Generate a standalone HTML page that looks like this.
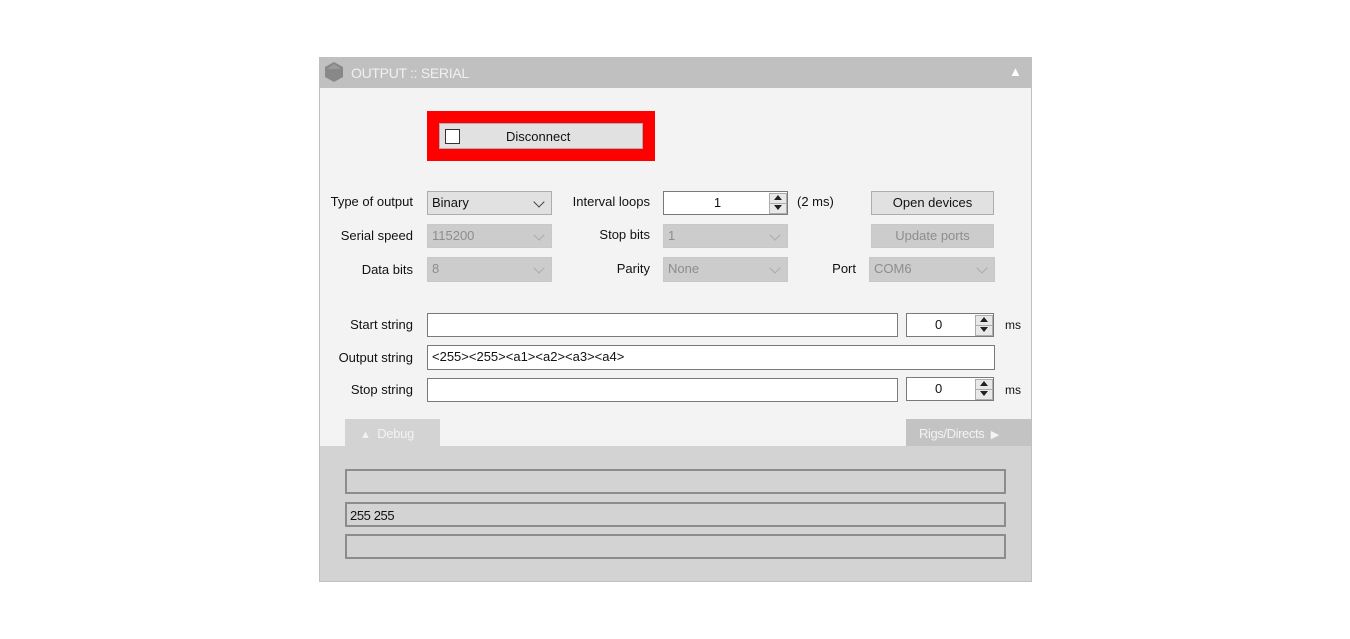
<!DOCTYPE html>
<html><head><style>
body{margin:0;width:1350px;height:639px;background:#fff;position:relative;font-family:"Liberation Sans",sans-serif;font-size:13px;color:#111;overflow:hidden}
div{position:absolute;box-sizing:border-box}
.lbl{text-align:right}
.cb{background:#e1e1e1;border:1px solid #adadad;padding:3px 0 0 4px}
.cbd{background:#cccccc;border:1px solid #c8c8c8;color:#8d8d8d;padding:3px 0 0 4px}
.arr{position:absolute;right:8px;top:6px;width:7px;height:7px;border-right:1px solid #444;border-bottom:1px solid #444;transform:rotate(45deg)}
.cbd .arr{border-color:#aaa}
.tb{background:#fff;border:1px solid #7a7a7a;padding:3px 0 0 4px}
.btn{background:#e1e1e1;border:1px solid #adadad;text-align:center;padding-top:3px}
.spin{position:absolute;right:1px;top:1px;width:18px;height:20px;background:#fff}
.spin i{position:absolute;left:1px;width:16px;height:9px;border:1px solid #adadad;background:#e8e8e8}
.spin i.u{top:0}.spin i.d{top:10px}
.spin i.u:after{content:"";position:absolute;left:4px;top:1px;border-left:4px solid transparent;border-right:4px solid transparent;border-bottom:5px solid #222}
.spin i.d:after{content:"";position:absolute;left:4px;top:1px;border-left:4px solid transparent;border-right:4px solid transparent;border-top:5px solid #222}
.dbg{background:#d3d3d3;border:2px solid #8c8c8c;left:345px;width:661px;height:25px;padding:4px 0 0 3px;letter-spacing:-0.4px}
</style></head><body>
<div style="left:319px;top:57px;width:713px;height:525px;background:#f3f3f3;border:1px solid #c0c0c0"></div>
<div style="left:319px;top:57px;width:713px;height:31px;background:#c0c0c0"></div>
<svg style="position:absolute;left:323px;top:61px" width="22" height="22"><polygon points="11,1 20,6 20,16 11,21 2,16 2,6" fill="#888"/><polygon points="11,3 18,8 4,8" fill="#9a9a9a"/></svg>
<div style="left:351px;top:65px;color:#f0f0f0;font-size:14px;letter-spacing:-0.3px">OUTPUT :: SERIAL</div>
<div style="left:1009px;top:64px;color:#fff;font-size:13px">▲</div>

<div style="left:427px;top:111px;width:228px;height:50px;background:#ff0000"></div>
<div style="left:439px;top:123px;width:204px;height:26px;background:#e1e1e1;border:1px solid #adadad"></div>
<div style="left:445px;top:129px;width:15px;height:15px;background:#fff;border:1px solid #333"></div>
<div style="left:506px;top:129px">Disconnect</div>

<div class="lbl" style="left:310px;width:103px;top:194px">Type of output</div>
<div class="lbl" style="left:310px;width:103px;top:228px">Serial speed</div>
<div class="lbl" style="left:310px;width:103px;top:262px">Data bits</div>
<div class="cb" style="left:427px;top:191px;width:125px;height:24px">Binary<span class="arr"></span></div>
<div class="cbd" style="left:427px;top:224px;width:125px;height:24px">115200<span class="arr"></span></div>
<div class="cbd" style="left:427px;top:257px;width:125px;height:25px">8<span class="arr"></span></div>

<div class="lbl" style="left:550px;width:100px;top:194px">Interval loops</div>
<div class="lbl" style="left:550px;width:100px;top:227px">Stop bits</div>
<div class="lbl" style="left:550px;width:100px;top:261px">Parity</div>
<div class="tb" style="left:663px;top:191px;width:125px;height:24px;text-align:center;padding-right:20px">1<div class="spin"><i class="u"></i><i class="d"></i></div></div>
<div class="cbd" style="left:663px;top:224px;width:125px;height:24px">1<span class="arr"></span></div>
<div class="cbd" style="left:663px;top:257px;width:125px;height:25px">None<span class="arr"></span></div>
<div style="left:797px;top:194px">(2 ms)</div>

<div class="btn" style="left:871px;top:191px;width:123px;height:24px">Open devices</div>
<div class="btn" style="left:871px;top:224px;width:123px;height:24px;background:#cccccc;color:#8d8d8d;border-color:#c8c8c8">Update ports</div>
<div class="lbl" style="left:800px;width:56px;top:261px">Port</div>
<div class="cbd" style="left:869px;top:257px;width:126px;height:25px">COM6<span class="arr"></span></div>

<div class="lbl" style="left:310px;width:103px;top:317px">Start string</div>
<div class="lbl" style="left:310px;width:103px;top:350px">Output string</div>
<div class="lbl" style="left:310px;width:103px;top:382px">Stop string</div>
<div class="tb" style="left:427px;top:313px;width:471px;height:24px"></div>
<div class="tb" style="left:427px;top:345px;width:568px;height:25px">&lt;255&gt;&lt;255&gt;&lt;a1&gt;&lt;a2&gt;&lt;a3&gt;&lt;a4&gt;</div>
<div class="tb" style="left:427px;top:378px;width:471px;height:24px"></div>
<div class="tb" style="left:906px;top:313px;width:88px;height:24px;padding:3px 0 0 28px">0<div class="spin"><i class="u"></i><i class="d"></i></div></div>
<div class="tb" style="left:906px;top:377px;width:88px;height:24px;padding:3px 0 0 28px">0<div class="spin"><i class="u"></i><i class="d"></i></div></div>
<div style="left:1005px;top:318px;font-size:12px">ms</div>
<div style="left:1005px;top:383px;font-size:12px">ms</div>

<div style="left:320px;top:446px;width:711px;height:135px;background:#d3d3d3"></div>
<div style="left:345px;top:419px;width:95px;height:27px;background:#d3d3d3;color:#f3f3f3;padding:7px 0 0 15px;letter-spacing:-0.3px"><span style="font-size:11px">▲</span>&nbsp;&nbsp;Debug</div>
<div style="left:906px;top:419px;width:125px;height:27px;background:#c3c3c3;color:#f3f3f3;padding:7px 0 0 13px;letter-spacing:-0.4px">Rigs/Directs&nbsp;&nbsp;<span style="font-size:11px">▶</span></div>
<div class="dbg" style="top:469px"></div>
<div class="dbg" style="top:502px">255 255</div>
<div class="dbg" style="top:534px"></div>
</body></html>
